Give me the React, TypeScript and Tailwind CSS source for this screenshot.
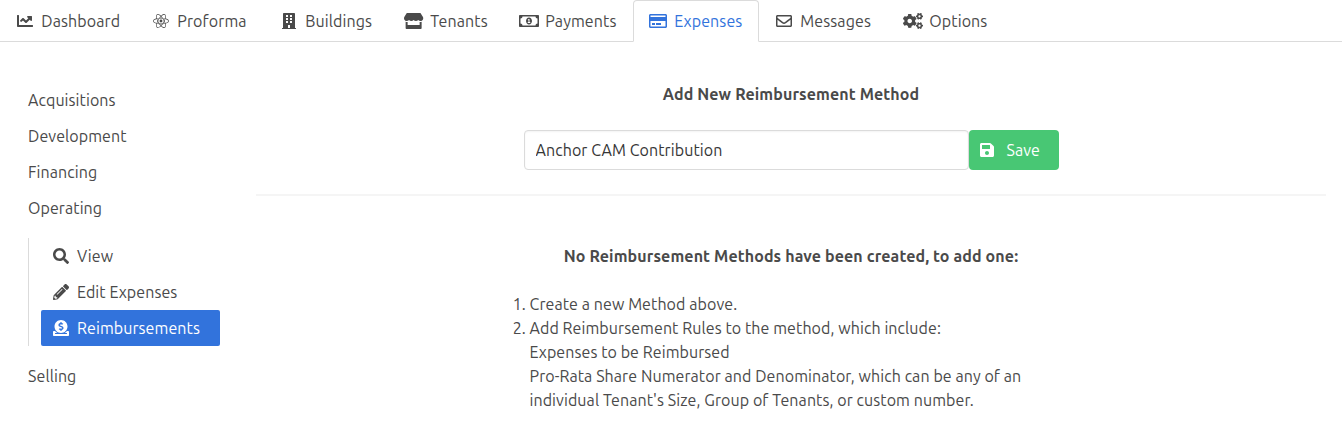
import React from 'react';
import type { IconType } from 'react-icons';
import {
  FaBuilding,
  FaChartLine,
  FaCogs,
  FaDonate,
  FaPencilAlt,
  FaReact,
  FaRegCreditCard,
  FaRegEnvelope,
  FaRegMoneyBillAlt,
  FaSave,
  FaSearch,
  FaStore,
} from 'react-icons/fa';

type Tab = { label: string; icon: IconType; width: string; glyph?: string; active?: boolean };

const tabs: Tab[] = [
  { label: 'Dashboard', icon: FaChartLine, width: 'w-[136px]' },
  { label: 'Proforma', icon: FaReact, width: 'w-[128px]' },
  { label: 'Buildings', icon: FaBuilding, width: 'w-[125px]' },
  { label: 'Tenants', icon: FaStore, width: 'w-[115px]', glyph: 'w-[19.25px]' },
  { label: 'Payments', icon: FaRegMoneyBillAlt, width: 'w-[129px]', glyph: 'w-5' },
  { label: 'Expenses', icon: FaRegCreditCard, width: 'w-[126px]', glyph: 'w-[18px]', active: true },
  { label: 'Messages', icon: FaRegEnvelope, width: 'w-[129px]' },
  { label: 'Options', icon: FaCogs, width: 'w-[116px]', glyph: 'w-5' },
];

const operating: { label: string; icon: IconType; active?: boolean }[] = [
  { label: 'View', icon: FaSearch },
  { label: 'Edit Expenses', icon: FaPencilAlt },
  { label: 'Reimbursements', icon: FaDonate, active: true },
];

function Icon({ icon: Glyph, width = 'w-4' }: { icon: IconType; width?: string }) {
  return (
    <span className="flex h-6 w-6 shrink-0 items-center justify-center">
      <Glyph className={`h-4 shrink-0 ${width}`} />
    </span>
  );
}

function TabBar() {
  return (
    <nav className="flex h-[42px] border-b border-[#dbdbdb]">
      {tabs.map(({ label, icon, width, glyph, active }) => (
        <a
          key={label}
          className={`flex h-[42px] shrink-0 items-center rounded-t border pb-px pl-3 whitespace-nowrap ${width} ${
            active ? 'border-[#dbdbdb] border-b-white bg-white text-[#3273dc]' : 'border-transparent'
          }`}
        >
          <Icon icon={icon} width={glyph} />
          <span className="ml-[4.3px] tracking-[0.1px]">{label}</span>
        </a>
      ))}
    </nav>
  );
}

function MenuItem({ label }: { label: string }) {
  return <a className="block px-3 py-1.5">{label}</a>;
}

function Sidebar() {
  return (
    <aside className="w-[204px] shrink-0">
      <MenuItem label="Acquisitions" />
      <MenuItem label="Development" />
      <MenuItem label="Financing" />
      <MenuItem label="Operating" />
      <div className="m-3 mr-0 border-l border-[#dbdbdb] pl-3">
        {operating.map(({ label, icon, active }) => (
          <a
            key={label}
            className={`flex rounded-xs py-1.5 pl-2 ${active ? 'bg-[#3273dc] text-white' : ''}`}
          >
            <Icon icon={icon} />
            <span className="ml-1">{label}</span>
          </a>
        ))}
      </div>
      <MenuItem label="Selling" />
    </aside>
  );
}

export default function App() {
  return (
    <div className="h-[436px] overflow-hidden bg-white font-[Ubuntu,'Noto_Sans',sans-serif] text-base leading-6 tracking-[0.08px] text-[#4a4a4a]">
      <TabBar />
      <div className="flex gap-9 px-4 pt-10">
        <Sidebar />
        <main className="flex-1">
          <section className="flex flex-col items-center pb-6">
            <h2 className="font-bold tracking-[0.11px]">Add New Reimbursement Method</h2>
            <div className="mt-6 flex h-10">
              <input
                className="h-10 w-[445px] rounded border border-[#dbdbdb] px-[11px] text-[#363636] shadow-[inset_0_1px_2px_rgba(10,10,10,0.05)] outline-none"
                defaultValue="Anchor CAM Contribution"
              />
              <button className="flex h-10 w-[90px] items-center rounded bg-[#48c774] pl-1.5 text-white">
                <Icon icon={FaSave} />
                <span className="ml-2">Save</span>
              </button>
            </div>
          </section>
          <hr className="h-0.5 border-0 bg-[#f5f5f5]" />
          <section className="pt-12">
            <h2 className="text-center font-bold tracking-[0.11px]">
              No Reimbursement Methods have been created, to add one:
            </h2>
            <ol className="mt-6 ml-[273.5px] w-[530px] list-decimal">
              <li>Create a new Method above.</li>
              <li>
                Add Reimbursement Rules to the method, which include:
                <p>Expenses to be Reimbursed</p>
                <p>Pro-Rata Share Numerator and Denominator, which can be any of an</p>
                <p>individual Tenant's Size, Group of Tenants, or custom number.</p>
              </li>
            </ol>
          </section>
        </main>
      </div>
    </div>
  );
}
